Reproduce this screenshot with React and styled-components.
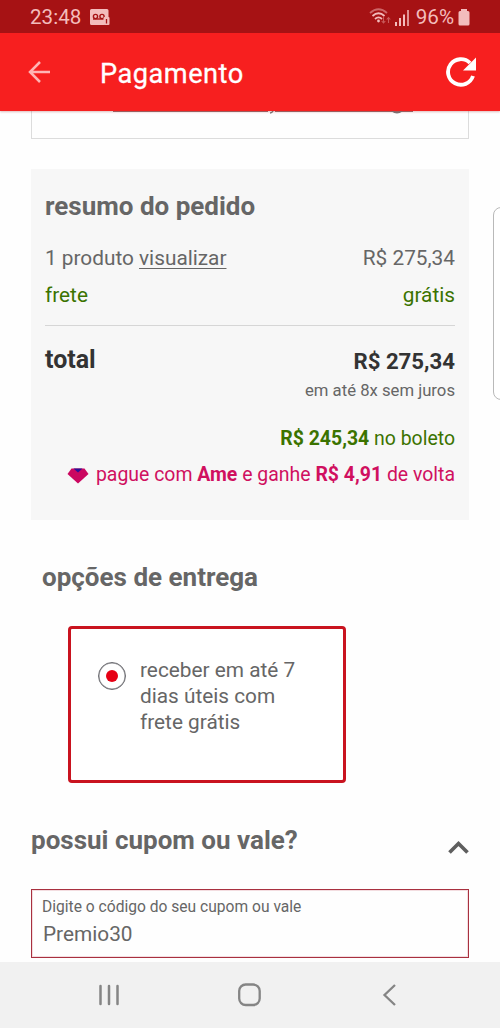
import React, { useState } from "react";
import styled, { createGlobalStyle } from "styled-components";

const GlobalStyle = createGlobalStyle`
  * {
    box-sizing: border-box;
  }
  body {
    margin: 0;
    background: #fefefe;
    font-family: Roboto, "Liberation Sans", sans-serif;
    color: #666666;
  }
  h1, h2, p {
    margin: 0;
  }
  button {
    border: 0;
    padding: 0;
    background: none;
    display: flex;
  }
`;

const Screen = styled.div`
  display: flex;
  flex-direction: column;
  width: 500px;
  height: 1028px;
  overflow: hidden;
`;

const StatusBar = styled.div`
  display: flex;
  justify-content: space-between;
  align-items: center;
  flex: none;
  height: 33px;
  padding: 1px 30px 0 30px;
  background: #a61214;
  color: #f3bcbc;
`;

const StatusGroup = styled.div`
  display: flex;
  align-items: center;
`;

const StatusText = styled.span`
  font-size: 20.6px;
  line-height: 30px;
`;

const VoicemailSvg = styled.svg`
  margin-left: 9px;
`;

const BatterySvg = styled.svg`
  margin-left: 4px;
`;

const AppBar = styled.header`
  display: flex;
  align-items: center;
  flex: none;
  height: 78px;
  padding: 0 23px 0 27px;
  background: #f71f1f;
  box-shadow: 0 1px 2px rgba(160, 60, 60, 0.35);
  z-index: 1;
`;

const AppTitle = styled.h1`
  flex: 1;
  margin: 4px 0 0 49px;
  font-size: 27.2px;
  font-weight: 400;
  letter-spacing: 0.5px;
  color: #ffffff;
  -webkit-text-stroke: 0.3px #ffffff;
`;

const Content = styled.main`
  position: relative;
  flex: 1;
  min-height: 0;
  padding: 0 31px;
  overflow: hidden;
`;

const AddressBox = styled.div`
  height: 28px;
  border: 1px solid #dcdcdc;
  border-top: 0;
  padding-left: 81px;
`;

const AddressTail = styled.svg`
  display: block;
`;

const Summary = styled.section`
  height: 351px;
  margin-top: 30px;
  padding: 19px 14px 0;
  background: #f7f7f7;
`;

const Heading = styled.h2`
  font-size: 26px;
  line-height: 37px;
  font-weight: 700;
`;

const Row = styled.div`
  display: flex;
  justify-content: space-between;
  height: 37px;
  font-size: 20.8px;
  line-height: 37px;
  color: ${(props) => props.$color || "#666666"};
`;

const SummaryRows = styled.div`
  margin-top: 15px;
  height: 86px;
  border-bottom: 1px solid #d6d6d6;
`;

const Link = styled.a`
  text-decoration: underline;
  text-decoration-thickness: 1px;
  text-underline-offset: 3px;
  text-decoration-skip-ink: none;
`;

const TotalRow = styled.div`
  display: flex;
  justify-content: space-between;
  height: 35px;
  margin-top: 17px;
  line-height: 32px;
  font-weight: 700;
  color: #333333;
`;

const TotalLabel = styled.span`
  margin-top: 1px;
  font-size: 25px;
`;

const TotalValue = styled.span`
  margin-top: 2px;
  font-size: 22.2px;
`;

const Installments = styled.p`
  margin-top: 1px;
  font-size: 16.7px;
  line-height: 24px;
  text-align: right;
`;

const PaymentLine = styled.p`
  display: flex;
  justify-content: flex-end;
  align-items: center;
  height: 36px;
  margin-top: ${(props) => props.$gap || "0"};
  font-size: 19.45px;
  white-space: pre;
  color: ${(props) => props.$color};
`;

const Gem = styled.svg`
  margin: 4px 7px 0 0;
`;

const DeliverySection = styled.section`
  padding: 39px 11px 0;
`;

const DeliveryCard = styled.label`
  display: flex;
  width: 278px;
  height: 157px;
  margin: 30px 0 0 26px;
  padding: 28px 0 0 27px;
  border: 3px solid #c9131f;
  border-radius: 4px;
  background: #ffffff;
`;

const Radio = styled.span`
  display: flex;
  align-items: center;
  justify-content: center;
  flex: none;
  width: 28px;
  height: 28px;
  margin-top: 5px;
  border: 1px solid #6b6b70;
  border-radius: 50%;
  box-shadow: inset 0 0 0 0.5px #8a8a8e;
`;

const RadioDot = styled.span`
  width: 12px;
  height: 12px;
  border-radius: 50%;
  background: #e60014;
`;

const DeliveryText = styled.span`
  width: 170px;
  margin-left: 14px;
  font-size: 20.8px;
  line-height: 26px;
`;

const CouponHeader = styled.div`
  display: flex;
  justify-content: space-between;
  margin-top: 39px;
`;

const CouponField = styled.div`
  height: 69px;
  margin-top: 30px;
  padding: 7px 10px;
  border: 1px solid #a8303f;
  box-shadow: inset 0 0 0 1px #f3dde0;
`;

const FieldLabel = styled.label`
  display: block;
  font-size: 15.6px;
  line-height: 20px;
`;

const FieldInput = styled.input`
  display: block;
  width: 100%;
  height: 32px;
  margin-top: 1px;
  padding: 0 0 0 1px;
  border: 0;
  outline: 0;
  background: transparent;
  font-family: inherit;
  font-size: 20.8px;
  color: #666666;
`;

const SideHandle = styled.div`
  position: absolute;
  top: 96px;
  right: -12px;
  width: 19px;
  height: 193px;
  border: 1px solid #b9b9b9;
  border-radius: 8px;
  background: #ffffff;
`;

const NavBar = styled.nav`
  display: flex;
  align-items: center;
  justify-content: space-between;
  flex: none;
  height: 66px;
  padding: 0 98px;
  background: #f1f1f1;
`;

const VoicemailIcon = () => (
  <VoicemailSvg width="20" height="17" viewBox="0 0 20 17">
    <path d="M1.500 0H17q1.500 0 1.500 1.500V8h-4.500v8H1.500Q0 16 0 14.500v-13Q0 0 1.500 0Z" fill="#f3bcbc" />
    <g fill="none" stroke="#a61214" strokeWidth="1.400">
      <circle cx="5.500" cy="7.500" r="2.100" />
      <circle cx="12" cy="7.500" r="2.100" />
      <path d="M3 10h11" />
    </g>
    <rect x="13.500" y="8" width="6" height="8" rx="1" fill="#f3bcbc" />
    <path d="M16.500 10v4.500" stroke="#a61214" strokeWidth="1.300" />
  </VoicemailSvg>
);

const SignalIcons = () => (
  <svg width="47" height="18" viewBox="0 0 47 18">
    <g fill="none" stroke="#f3bcbc" strokeWidth="1.800">
      <path d="M1 5Q9.500-2.500 18 5" opacity="0.5" />
      <path d="M3.500 8Q9.500 2.500 15.500 8" />
      <path d="M6 11Q9.500 7.800 13 11" />
    </g>
    <circle cx="9.500" cy="13" r="1.400" fill="#f3bcbc" />
    <path d="M14.500 9v6m-1.800-2 1.800 2 1.800-2M19.500 15V9.500m-1.800 2 1.800-2 1.800 2" fill="none" stroke="#c85a5a" strokeWidth="1.100" />
    <g fill="#f3bcbc">
      <rect x="26" y="14" width="2" height="4" />
      <rect x="30" y="10" width="2" height="8" />
      <rect x="34" y="6.500" width="2" height="11.500" />
      <rect x="38" y="2" width="2" height="16" opacity="0.75" />
    </g>
  </svg>
);

export default function App() {
  const [coupon, setCoupon] = useState("Premio30");

  return (
    <Screen>
      <GlobalStyle />
      <StatusBar>
        <StatusGroup>
          <StatusText>23:48</StatusText>
          <VoicemailIcon />
        </StatusGroup>
        <StatusGroup>
          <SignalIcons />
          <StatusText>96%</StatusText>
          <BatterySvg width="12" height="17" viewBox="0 0 12 17">
            <path d="M3 0h6v2h1q1.500 0 1.500 1.500V15q0 1.500-1.500 1.500H2Q.5 16.500.5 15V3.500Q.5 2 2 2h1Z" fill="#f3bcbc" />
          </BatterySvg>
        </StatusGroup>
      </StatusBar>
      <AppBar>
        <button aria-label="Voltar">
          <svg width="24" height="24" viewBox="0 0 24 24" fill="none" stroke="#ffb5b5" strokeWidth="2.500">
            <path d="M23 12H3M13 2 3 12l10 10" />
          </svg>
        </button>
        <AppTitle>Pagamento</AppTitle>
        <button aria-label="Atualizar">
          <svg width="32" height="32" viewBox="0 0 32 32">
            <path d="M28 20A12.800 12.800 0 1 1 25 7" fill="none" stroke="#fff" strokeWidth="3.900" />
            <path d="M31 1.500v13H18Z" fill="#fff" />
          </svg>
        </button>
      </AppBar>
      <Content>
        <AddressBox>
          <AddressTail width="302" height="4" viewBox="0 0 302 4">
            <path d="M0 .5h155M162 .5h138" stroke="#98696b" />
            <path d="M160 0q-1 2-3 2M279 0q5 3.500 10 0" fill="none" stroke="#777" strokeWidth="1.500" />
          </AddressTail>
        </AddressBox>
        <Summary>
          <Heading>resumo do pedido</Heading>
          <SummaryRows>
            <Row>
              <span>
                1 produto <Link>visualizar</Link>
              </span>
              <span>R$ 275,34</span>
            </Row>
            <Row $color="#3b7300">
              <span>frete</span>
              <span>grátis</span>
            </Row>
          </SummaryRows>
          <TotalRow>
            <TotalLabel>total</TotalLabel>
            <TotalValue>R$ 275,34</TotalValue>
          </TotalRow>
          <Installments>em até 8x sem juros</Installments>
          <PaymentLine $color="#3b7300" $gap="17px">
            <b>R$ 245,34</b> no boleto
          </PaymentLine>
          <PaymentLine $color="#d0105f">
            <Gem width="22" height="16" viewBox="0 0 22 16">
              <path d="M4.500.5h13L21.500 6 11 15.500.5 6Z" fill="#cb0760" />
              <path d="M6.500.5h9L11 4.500Z" fill="#2b1096" />
            </Gem>
            pague com <b>Ame</b> e ganhe <b>R$ 4,91</b> de volta
          </PaymentLine>
        </Summary>
        <DeliverySection>
          <Heading>opções de entrega</Heading>
          <DeliveryCard>
            <Radio>
              <RadioDot />
            </Radio>
            <DeliveryText>receber em até 7 dias úteis com frete grátis</DeliveryText>
          </DeliveryCard>
        </DeliverySection>
        <CouponHeader>
          <Heading>possui cupom ou vale?</Heading>
          <svg width="22" height="36" viewBox="0 0 22 36" fill="none" stroke="#5f5f5f" strokeWidth="3.700">
            <path d="m2.500 30.500 9-9 9 9" />
          </svg>
        </CouponHeader>
        <CouponField>
          <FieldLabel htmlFor="coupon">Digite o código do seu cupom ou vale</FieldLabel>
          <FieldInput id="coupon" value={coupon} onChange={(e) => setCoupon(e.target.value)} />
        </CouponField>
        <SideHandle />
      </Content>
      <NavBar>
        <svg width="22" height="22" viewBox="0 0 22 22" stroke="#858585" strokeWidth="2.500" strokeLinecap="round">
          <path d="M2.500 2v18M11 2v18M19.500 2v18" />
        </svg>
        <svg width="24" height="24" viewBox="0 0 24 24" fill="none" stroke="#858585" strokeWidth="2.300">
          <rect x="1.200" y="1.500" width="20.500" height="20.500" rx="6.500" />
        </svg>
        <svg width="22" height="22" viewBox="0 0 22 22" fill="none" stroke="#858585" strokeWidth="2.300">
          <path d="M15 1 4.500 11 15 21" />
        </svg>
      </NavBar>
    </Screen>
  );
}
